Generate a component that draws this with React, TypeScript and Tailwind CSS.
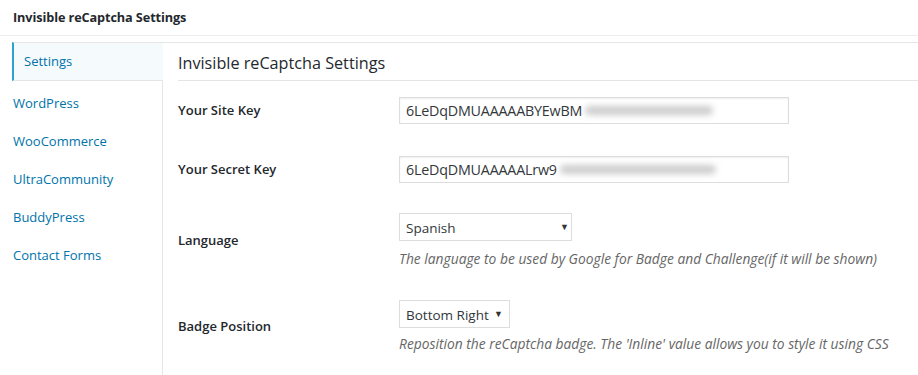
import { useState } from "react";

// WP-admin style settings screen for the Invisible reCaptcha plugin.
const FONT = "font-['Open_Sans','Noto_Sans',sans-serif]";

const NAV = ["Settings", "WordPress", "WooCommerce", "UltraCommunity", "BuddyPress", "Contact Forms"];

export default function App() {
  const [active, setActive] = useState("Settings");

  return (
    <div className={`${FONT} w-[918px] h-[375px] overflow-hidden bg-white text-[#23282d]`}>
      <div className="h-[36px] border-b border-[#eeeeee] pl-[13px] flex items-center pt-px">
        <h1 className="text-[12.7px] font-bold tracking-[-0.1px]">Invisible reCaptcha Settings</h1>
      </div>

      <div className="flex mt-[6px] h-[333px]">
        {/* left tab list */}
        <ul className="w-[162px] shrink-0">
          {NAV.map((n) =>
            n === active ? (
              <li
                key={n}
                className="relative z-10 ml-[12px] -mr-px mb-[4px] h-[39px] flex items-center pl-[10px] pt-px border-l-2 border-l-[#2ea2cc] border-y border-y-[#e5e5e5] bg-[#f5fafd] text-[13px] text-[#0073aa]"
              >
                {n}
              </li>
            ) : (
              <li
                key={n}
                onClick={() => setActive(n)}
                className="h-[38px] flex items-center pl-[13px] text-[13px] text-[#0073aa] cursor-pointer"
              >
                {n}
              </li>
            ),
          )}
        </ul>

        {/* settings panel */}
        <div className="flex-1 border-l border-t border-[#e5e5e5] pl-[15px]">
          <h2 className="h-[38px] border-b border-[#e5e5e5] flex items-center pt-[3px] text-[16.2px] text-[#23282d]">
            Invisible reCaptcha Settings
          </h2>

          <Row label="Your Site Key">
            <KeyInput value="6LeDqDMUAAAAABYEwBM" blur="w-[128px]" />
          </Row>
          <Row label="Your Secret Key" pb="pb-[14px]">
            <KeyInput value="6LeDqDMUAAAAALrw9" blur="w-[156px]" />
          </Row>
          <Row label="Language">
            <div>
              <Select value="Spanish" width="w-[173px]" pr="pr-[2px]" />
              <p className="mt-[9px] text-[13.8px] leading-[18px] italic text-[#666666]">
                The language to be used by Google for Badge and Challenge(if it will be shown)
              </p>
            </div>
          </Row>
          <Row label="Badge Position">
            <div>
              <Select value="Bottom Right" width="w-[111px]" pr="pr-[6px]" />
              <p className="mt-[7px] text-[13.8px] leading-[18px] italic text-[#666666]">
                Reposition the reCaptcha badge. The 'Inline' value allows you to style it using CSS
              </p>
            </div>
          </Row>
        </div>
      </div>
    </div>
  );
}

function Row({ label, pb = "pb-[16px]", children }: { label: string; pb?: string; children: React.ReactNode }) {
  return (
    <div className={`flex items-center pt-[16px] ${pb}`}>
      <div className="w-[221px] shrink-0 text-[13px] font-semibold">{label}</div>
      {children}
    </div>
  );
}

function KeyInput({ value, blur }: { value: string; blur: string }) {
  return (
    <div className="w-[390px] h-[27px] border border-[#dddddd] shadow-[inset_0_1px_2px_rgba(0,0,0,0.07)] flex items-center pl-[6px] text-[14.3px] tracking-[-0.2px] text-[#32373c] overflow-hidden">
      <span>{value}</span>
      <span className={`inline-block ${blur} h-[9px] ml-[3px] rounded-full bg-[#cccccc] blur-[3px]`} />
    </div>
  );
}

function Select({ value, width, pr }: { value: string; width: string; pr: string }) {
  return (
    <div
      className={`${width} h-[28px] border border-[#dddddd] flex items-center justify-between pl-[6px] pt-[3px] ${pr} text-[13.5px] text-[#32373c]`}
    >
      <span>{value}</span>
      <span className="text-[9px] text-[#333333] -mt-[3px]">▼</span>
    </div>
  );
}
